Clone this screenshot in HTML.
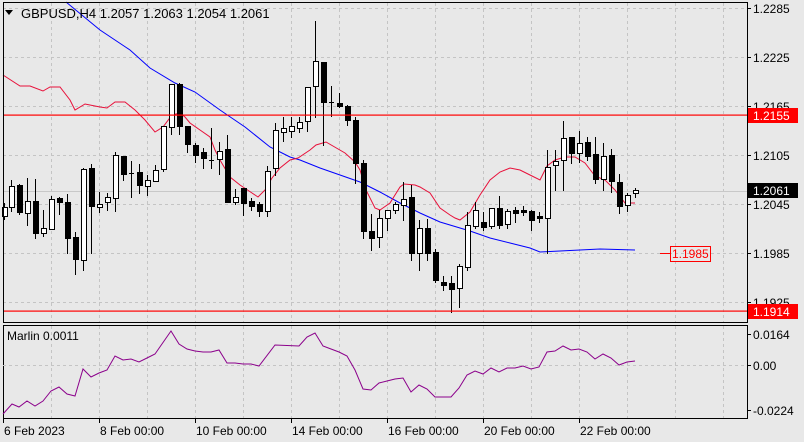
<!DOCTYPE html>
<html><head><meta charset="utf-8"><style>
html,body{margin:0;padding:0;background:#e8e8e8;width:804px;height:442px;overflow:hidden}
svg{display:block;font-family:"Liberation Sans",Tahoma,sans-serif}
</style></head><body>
<svg id="c" width="804" height="442" xmlns="http://www.w3.org/2000/svg">
<rect width="804" height="442" fill="#e8e8e8"/>
<g id="grid" stroke="#c4c4c4" stroke-dasharray="3,3" stroke-width="1" shape-rendering="crispEdges"></g>
<line x1="3" y1="191.5" x2="747" y2="191.5" stroke="#c8c8c8" shape-rendering="crispEdges"/>
<polyline fill="none" stroke="#0000ff" stroke-width="1" points="66,2 100,30 130,50 150,68 175,83 195,92 220,110 245,127 270,147 290,157 300,160 320,168 340,175 360,182 380,192 400,203 420,213 440,222 460,228 470,231 490,238 510,243 530,248 540,252 560,251 580,250 600,249 635,250"/>
<polyline fill="none" stroke="#e8103a" stroke-width="1" points="3,75 20,86 30,86 43,91 50,87 60,87 70,100 75,110 85,104 100,107 107,108 115,102 125,102 135,110 145,120 155,132 163,127 172,115 180,113 185,117 190,123 200,130 210,137 215,150 220,160 230,177 240,185 252,193 258,197 265,190 272,178 280,168 290,160 298,158 310,150 316,145 326,142 345,153 355,162 360,170 366,190 375,208 380,210 390,203 400,187 404,184 415,185 420,187 430,193 440,208 450,215 455,218 460,220 470,212 480,195 490,180 500,172 510,168 520,170 530,175 540,180 547,166 555,160 565,157 575,157 585,163 595,176 605,180 615,190 625,203 635,203"/>
<g id="cd" shape-rendering="crispEdges"></g>
<rect x="3" y="114.5" width="744" height="1.2" fill="#ff0000"/>
<rect x="3" y="310.5" width="744" height="1.2" fill="#ff0000"/>
<rect x="3.5" y="2.5" width="744" height="320" fill="none" stroke="#000" shape-rendering="crispEdges"/>
<rect x="3.5" y="325.5" width="744" height="93" fill="none" stroke="#000" shape-rendering="crispEdges"/>
<line x1="3" y1="365.5" x2="747" y2="365.5" stroke="#c4c4c4" stroke-dasharray="3,3"/>
<polyline fill="none" stroke="#8b008b" stroke-width="1" points="3,414 12,404 19,407 27,401 35,406 43,401 51,391 59,387 67,394 75,396 83,369 91,377 99,373 107,370 115,356 123,360 131,359 139,362 147,358 155,354 171,331 179,344 187,349 195,351 203,352 211,352 219,350 227,363 235,363 243,364 251,364 259,366 275,345 299,346 307,337 315,333 323,346 331,349 339,352 347,356 355,370 363,389 371,390 379,383 387,381 395,379 403,378 411,392 419,385 427,389 435,397 451,397 459,388 467,375 475,371 483,374 491,368 499,372 507,368 515,368 523,366 531,369 539,367 547,352 555,351 563,346 571,350 579,349 587,352 595,359 603,354 611,358 619,365 627,362 635,361"/>
<polygon points="5,10 13,10 9,15" fill="#000"/>
<text x="21" y="18" font-size="13" fill="#000">GBPUSD,H4  1.2057 1.2063 1.2054 1.2061</text>
<text x="7" y="340" font-size="12" fill="#000">Marlin 0.0011</text>
<g font-size="12" fill="#000" id="ax"></g>
<rect x="748" y="108" width="50" height="15" fill="#ff0000"/>
<text x="753" y="120" font-size="12" fill="#fff">1.2155</text>
<rect x="748" y="304" width="50" height="15" fill="#ff0000"/>
<text x="753" y="316" font-size="12" fill="#fff">1.1914</text>
<rect x="748" y="183" width="50" height="15" fill="#000"/>
<text x="753" y="195" font-size="12" fill="#fff">1.2061</text>
<line x1="660" y1="253.5" x2="670" y2="253.5" stroke="#ff0000"/>
<rect x="670.5" y="246.5" width="40" height="15" fill="none" stroke="#ff0000"/>
<text x="672" y="258" font-size="12" fill="#ff0000">1.1985</text>
</svg>
<script>
var ns="http://www.w3.org/2000/svg";
function el(p,t,a,txt){var e=document.createElementNS(ns,t);for(var k in a)e.setAttribute(k,a[k]);if(txt)e.textContent=txt;p.appendChild(e);return e;}
var g=document.getElementById('grid');
[8,57,106,155,204,253,302].forEach(function(y){el(g,'line',{x1:3,y1:y+.5,x2:747,y2:y+.5});});
for(var x=51;x<747;x+=48){el(g,'line',{x1:x+.5,y1:3,x2:x+.5,y2:322});el(g,'line',{x1:x+.5,y1:326,x2:x+.5,y2:418});}
var ax=document.getElementById('ax');
[['1.2285',8],['1.2225',57],['1.2165',106],['1.2105',155],['1.2045',204],['1.1985',253],['1.1925',302]].forEach(function(a){el(ax,'line',{x1:747,y1:a[1]+.5,x2:751,y2:a[1]+.5,stroke:'#000'});el(ax,'text',{x:753,y:a[1]+5},a[0]);});
[['0.0164',334],['0.00',365],['-0.0224',410]].forEach(function(a){el(ax,'line',{x1:747,y1:a[1]+.5,x2:751,y2:a[1]+.5,stroke:'#000'});el(ax,'text',{x:753,y:a[1]+5},a[0]);});
[['6 Feb 2023',3],['8 Feb 00:00',99],['10 Feb 00:00',195],['14 Feb 00:00',291],['16 Feb 00:00',387],['20 Feb 00:00',483],['22 Feb 00:00',579]].forEach(function(a){el(ax,'line',{x1:a[1]+.5,y1:418,x2:a[1]+.5,y2:423,stroke:'#000'});el(ax,'text',{x:a[1]+1,y:435},a[0]);});
var C=[[4,203,207,216,219,1],[11,180,186,207,211,1],[19,184,185,212,214,0],[27,178,201,213,225,1],[35,179,201,233,238,0],[43,210,228,233,236,1],[51,196,199,229,229,1],[59,197,198,202,214,0],[67,194,202,238,253,0],[75,232,237,259,274,0],[83,168,169,260,270,1],[91,164,168,206,253,0],[99,192,204,207,212,1],[107,193,197,202,210,1],[115,152,155,198,211,1],[123,156,156,174,180,0],[131,161,173,173,197,0],[139,164,172,185,193,0],[147,175,180,186,195,1],[155,165,170,181,181,1],[163,126,126,169,171,1],[171,84,84,127,134,1],[179,83,84,126,134,0],[187,126,126,144,152,0],[195,143,145,155,162,0],[203,148,152,158,168,0],[211,128,160,160,168,0],[219,142,151,159,174,1],[227,135,149,202,202,0],[235,189,197,202,204,1],[243,188,188,203,215,0],[251,198,201,206,210,0],[259,202,204,211,216,0],[267,166,171,211,216,1],[275,123,130,168,175,1],[283,117,128,132,141,1],[291,117,126,131,137,1],[299,117,122,128,132,1],[307,87,87,121,131,1],[315,21,61,86,117,1],[323,62,62,102,145,0],[331,86,102,102,116,0],[339,93,103,106,107,0],[347,105,106,120,125,0],[355,117,120,163,183,0],[363,160,163,231,238,0],[371,214,231,238,250,0],[379,210,218,237,247,1],[387,210,210,218,230,1],[395,202,204,210,213,1],[403,182,199,205,220,1],[411,185,197,253,260,0],[419,220,228,253,270,1],[427,219,228,253,260,0],[435,249,252,280,282,0],[443,276,282,285,290,0],[451,276,283,289,312,0],[459,264,266,288,307,1],[467,212,225,267,270,1],[475,202,210,226,228,1],[483,212,222,227,230,0],[491,208,208,226,228,1],[499,196,208,225,228,0],[507,209,211,224,228,1],[515,207,210,213,222,0],[523,206,210,212,215,0],[531,210,211,220,230,0],[539,212,216,218,222,0],[547,150,167,218,253,1],[555,150,161,165,190,1],[563,121,138,160,190,1],[571,137,137,153,163,0],[579,131,143,153,162,1],[587,137,142,156,160,0],[595,137,154,179,183,0],[603,143,156,179,190,1],[611,149,155,181,192,0],[619,174,182,206,213,0],[627,193,195,205,211,1],[635,188,190,193,197,1]];
var cd=document.getElementById('cd');
C.forEach(function(c){var x=c[0];el(cd,'line',{x1:x+.5,y1:c[1],x2:x+.5,y2:c[4]+1,stroke:'#000'});
var h=Math.max(c[3]-c[2],0);if(h<1){el(cd,'line',{x1:x-2,y1:c[2]+.5,x2:x+3,y2:c[2]+.5,stroke:'#000'});}
else el(cd,'rect',{x:x-2+.5,y:c[2]+.5,width:5,height:h,fill:c[5]?'#fff':'#000',stroke:'#000'});});
</script>
</body></html>
